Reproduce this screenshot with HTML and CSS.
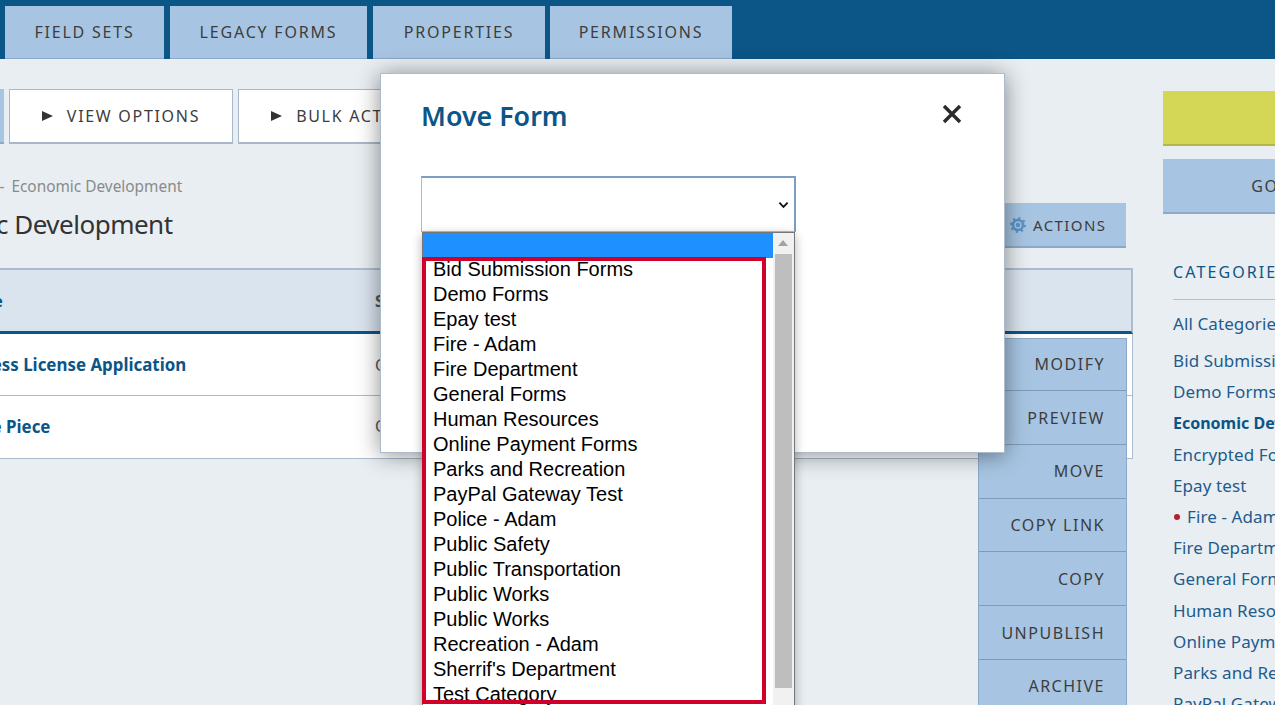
FILE: index.html
```html
<!DOCTYPE html>
<html lang="en">
<head>
  <meta charset="UTF-8">
  <title>Move Form</title>
  <link rel="stylesheet" href="styles.css">
</head>
<body>
  <div class="page">
    <nav class="tabs">
      <a class="tab">FIELD SETS</a>
      <a class="tab">LEGACY FORMS</a>
      <a class="tab">PROPERTIES</a>
      <a class="tab">PERMISSIONS</a>
    </nav>

    <div class="content">
      <main class="main">
        <div class="toolbar">
          <button class="tool tool-blue">NEW</button>
          <button class="tool"><span class="arrow"></span>VIEW OPTIONS</button>
          <button class="tool"><span class="arrow"></span>BULK ACTIONS</button>
        </div>

        <div class="crumbs">Forms <span class="crumb-sep">-</span> Economic Development</div>

        <div class="title-row">
          <h1>Economic Development</h1>
          <button class="actions">
            <svg class="gear" viewBox="0 0 16 16" width="16" height="16">
              <circle cx="8" cy="8" r="5" fill="none" stroke="#5b93c7" stroke-width="2.6"/>
              <circle cx="8" cy="8" r="7" fill="none" stroke="#5b93c7" stroke-width="2" stroke-dasharray="2.2 3.3"/>
              <circle cx="8" cy="8" r="2.2" fill="#5b93c7"/>
            </svg>
            ACTIONS
          </button>
        </div>

        <div class="table">
          <div class="row row-head">
            <div class="col-name">Name</div>
            <div class="col-status">Status</div>
          </div>
          <div class="rows">
            <div class="row">
              <div class="col-name"><a>Business License Application</a></div>
              <div class="col-status">Open</div>
            </div>
            <div class="row">
              <div class="col-name"><a>Simple Piece</a></div>
              <div class="col-status">Open</div>
            </div>
            <ul class="menu">
              <li>MODIFY</li>
              <li>PREVIEW</li>
              <li>MOVE</li>
              <li>COPY LINK</li>
              <li>COPY</li>
              <li>UNPUBLISH</li>
              <li>ARCHIVE</li>
            </ul>
          </div>
        </div>
      </main>

      <aside class="side">
        <button class="side-btn side-yellow">NEW</button>
        <button class="side-btn">GO TO ARCHIVE</button>
        <h3>CATEGORIES</h3>
        <ul class="cats">
          <li class="cat-all">All Categories</li>
          <li>Bid Submission Forms</li>
          <li>Demo Forms</li>
          <li class="cat-active">Economic Development</li>
          <li>Encrypted Forms</li>
          <li>Epay test</li>
          <li><span class="dot"></span>Fire - Adam</li>
          <li>Fire Department</li>
          <li>General Forms</li>
          <li>Human Resources</li>
          <li>Online Payment Forms</li>
          <li>Parks and Recreation</li>
          <li>PayPal Gateway Test</li>
        </ul>
      </aside>
    </div>
  </div>

  <div class="modal">
    <div class="modal-head">
      <h2>Move Form</h2>
      <svg class="close" viewBox="0 0 20 20" width="20" height="20">
        <path d="M2 2 L18 18 M18 2 L2 18" stroke="#2b2b2b" stroke-width="3.4" fill="none"/>
      </svg>
    </div>
    <div class="select-wrap">
      <select class="cat-select"><option></option></select>
      <svg class="chevron" viewBox="0 0 12 8" width="11" height="8">
        <path d="M1.5 1.5 L6 6 L10.5 1.5" stroke="#111" stroke-width="2" fill="none"/>
      </svg>
    </div>

    <div class="dropdown">
      <div class="options">
        <div class="opt opt-on"></div>
        <div class="opt">Bid Submission Forms</div>
        <div class="opt">Demo Forms</div>
        <div class="opt">Epay test</div>
        <div class="opt">Fire - Adam</div>
        <div class="opt">Fire Department</div>
        <div class="opt">General Forms</div>
        <div class="opt">Human Resources</div>
        <div class="opt">Online Payment Forms</div>
        <div class="opt">Parks and Recreation</div>
        <div class="opt">PayPal Gateway Test</div>
        <div class="opt">Police - Adam</div>
        <div class="opt">Public Safety</div>
        <div class="opt">Public Transportation</div>
        <div class="opt">Public Works</div>
        <div class="opt">Public Works</div>
        <div class="opt">Recreation - Adam</div>
        <div class="opt">Sherrif's Department</div>
        <div class="opt">Test Category</div>
      </div>
      <div class="scrollbar">
        <div class="scroll-up"></div>
        <div class="scroll-thumb"></div>
      </div>
      <div class="red-box"></div>
    </div>
  </div>
</body>
</html>
```

FILE: styles.css
```css
html, body { margin: 0; padding: 0; height: 705px; overflow: hidden; }
body { background: #e9eef2; font-family: "Noto Sans", sans-serif; color: #333; position: relative; }
button { font-family: inherit; cursor: pointer; }
ul { list-style: none; margin: 0; padding: 0; }

/* the page is scrolled sideways in the shot, so it starts left of the window */
.page { width: 1600px; margin-left: -150px; }

.tabs { display: flex; gap: 6px; height: 59px; padding: 6px 0 0 155px; box-sizing: border-box; background: #0b5587; }
.tab { display: flex; align-items: center; justify-content: center; height: 53px; box-sizing: border-box; background: #a7c5e2; border-bottom: 1px solid #8ca9c9; font-size: 16px; letter-spacing: 1.8px; color: #3d3d3d; }
.tab:nth-child(1) { width: 159px; }
.tab:nth-child(2) { width: 197px; }
.tab:nth-child(3) { width: 172px; margin-right: -1px; }
.tab:nth-child(4) { width: 182px; }

.content { display: flex; }
.main { width: 1283px; flex: none; padding-top: 30px; box-sizing: border-box; }

.toolbar { display: flex; gap: 5px; padding-left: 34px; }
.tool { height: 55px; width: 224px; background: #fff; border: 1px solid #a9b8c9; border-bottom-width: 2px; font-size: 16px; letter-spacing: 1.7px; color: #3d3d3d; display: flex; align-items: center; justify-content: center; }
.tool-blue { width: 120px; background: #a7c5e2; border: none; border-bottom: 2px solid #8ca9c9; }
.arrow { width: 0; height: 0; border-left: 11px solid #333; border-top: 5px solid transparent; border-bottom: 5px solid transparent; margin-right: 14px; }

.crumbs { margin-top: 33px; padding-left: 97px; font-size: 15.4px; line-height: 20px; color: #8a8a8a; }
.crumb-sep { margin: 0 3px; }

.title-row { display: flex; justify-content: space-between; align-items: flex-start; padding-right: 7px; margin-top: 6px; height: 65px; }
h1 { margin: 0 0 0 44px; font-size: 26px; letter-spacing: -0.5px; font-weight: 400; line-height: 42px; color: #333; }
.actions { width: 126px; height: 45px; display: flex; align-items: center; gap: 7px; padding: 0 0 0 10px; background: #a7c5e2; border: none; border-bottom: 2px solid #8ca9c9; font-size: 15px; letter-spacing: 1.4px; color: #3d3d3d; box-sizing: border-box; }

.row { display: flex; align-items: center; height: 62px; background: #fff; border-bottom: 1px solid #adbccd; border-right: 1px solid #adbccd; box-sizing: border-box; font-size: 16px; }
.rows { position: relative; }
.row-head { height: 66px; background: #dae4ef; border-top: 2px solid #adbccd; border-bottom: 3px solid #0b5587; border-right: 2px solid #adbccd; font-weight: 700; color: #0b5587; }
.row-head .col-name { padding-left: 105px; }
.rows .row:nth-child(2) { height: 63px; padding-bottom: 2px; }
.col-name { width: 525px; flex: none; padding-left: 95px; box-sizing: border-box; }
.col-name a { color: #0b5587; font-weight: 700; font-size: 16.9px; }
.col-status { color: #555; }

.menu { position: absolute; top: 4px; right: 6px; width: 149px; background: #a7c5e2; border: 1px solid #8ca9c9; box-sizing: border-box; }
.menu li { height: 53.8px; box-sizing: border-box; border-bottom: 1px solid #7f9bbb; display: flex; align-items: center; justify-content: flex-end; padding-right: 21px; font-size: 16px; letter-spacing: 1.5px; color: #3d3d3d; }
.menu li:first-child { height: 52px; padding-bottom: 2px; }
.menu li:nth-child(2) { padding-top: 2px; }

.side { width: 317px; flex: none; margin-left: 30px; padding-top: 32px; }
.side-btn { display: block; width: 100%; height: 55px; margin-bottom: 13px; background: #a7c5e2; border: none; border-bottom: 2px solid #8ca9c9; font-size: 16px; letter-spacing: 1.6px; color: #3d3d3d; }
.side-yellow { background: #d4d755; border-bottom-color: #b5b54a; }
h3 { margin: 47px 0 0 10px; padding-bottom: 16px; border-bottom: 1px solid #b3c1d2; font-size: 16px; font-weight: 400; letter-spacing: 2.1px; line-height: 22px; color: #0b5587; }
.cats { padding-left: 10px; color: #1f5b8c; font-size: 17px; letter-spacing: 0.1px; }
.cats li { height: 31.2px; line-height: 31px; white-space: nowrap; }
.cats .cat-all { height: 45px; line-height: 48px; }
.cats .cat-active { font-weight: 700; color: #0b5587; font-size: 16px; letter-spacing: 0; line-height: 33px; }
.dot { display: inline-block; width: 6px; height: 6px; border-radius: 50%; background: #b3202c; margin: 0 7px 2px 1px; vertical-align: middle; }

.modal { position: absolute; left: 380px; top: 73px; width: 625px; height: 380px; box-sizing: border-box; background: #fff; border: 1px solid #adbccd; box-shadow: 0 2px 22px rgba(0, 0, 0, 0.45); padding: 0 42px 0 40px; }
.modal-head { display: flex; justify-content: space-between; align-items: center; padding-top: 22px; height: 40px; }
h2 { margin: 0; font-size: 26.8px; font-weight: 600; color: #0b5587; line-height: 40px; }
.close { margin-top: -4px; }
.select-wrap { position: relative; margin-top: 40px; width: 375px; }
.cat-select { display: block; width: 375px; height: 56px; box-sizing: border-box; appearance: none; background: #fff; border: 1px solid #adbccd; border-top: 2px solid #7b9dc2; border-right: 2px solid #7b9dc2; border-radius: 0; outline: none; }
.chevron { position: absolute; right: 7px; top: 25px; }

.dropdown { position: absolute; left: 41px; top: 158px; width: 373px; height: 500px; box-sizing: border-box; display: flex; align-items: flex-start; background: #fff; border: 1px solid #767676; box-shadow: 0 3px 10px rgba(0, 0, 0, 0.3); font-family: "Liberation Sans", sans-serif; font-size: 20px; color: #000; }
.options { width: 350px; flex: none; }
.opt { height: 25px; line-height: 23px; padding-left: 10px; white-space: nowrap; }
.opt-on { background: #1e90ff; }
.scrollbar { width: 21px; flex: none; height: 498px; background: #f1f1f1; }
.scroll-up { height: 21px; position: relative; }
.scroll-up::after { content: ""; position: absolute; left: 5px; top: 7px; border-left: 5px solid transparent; border-right: 5px solid transparent; border-bottom: 6px solid #a3a3a3; }
.scroll-thumb { width: 17px; height: 434px; margin-left: 2px; background: #bebebe; }

.red-box { position: absolute; left: -1px; top: 24px; width: 344px; height: 447px; box-sizing: border-box; border: 4px solid #d0002a; }
```
